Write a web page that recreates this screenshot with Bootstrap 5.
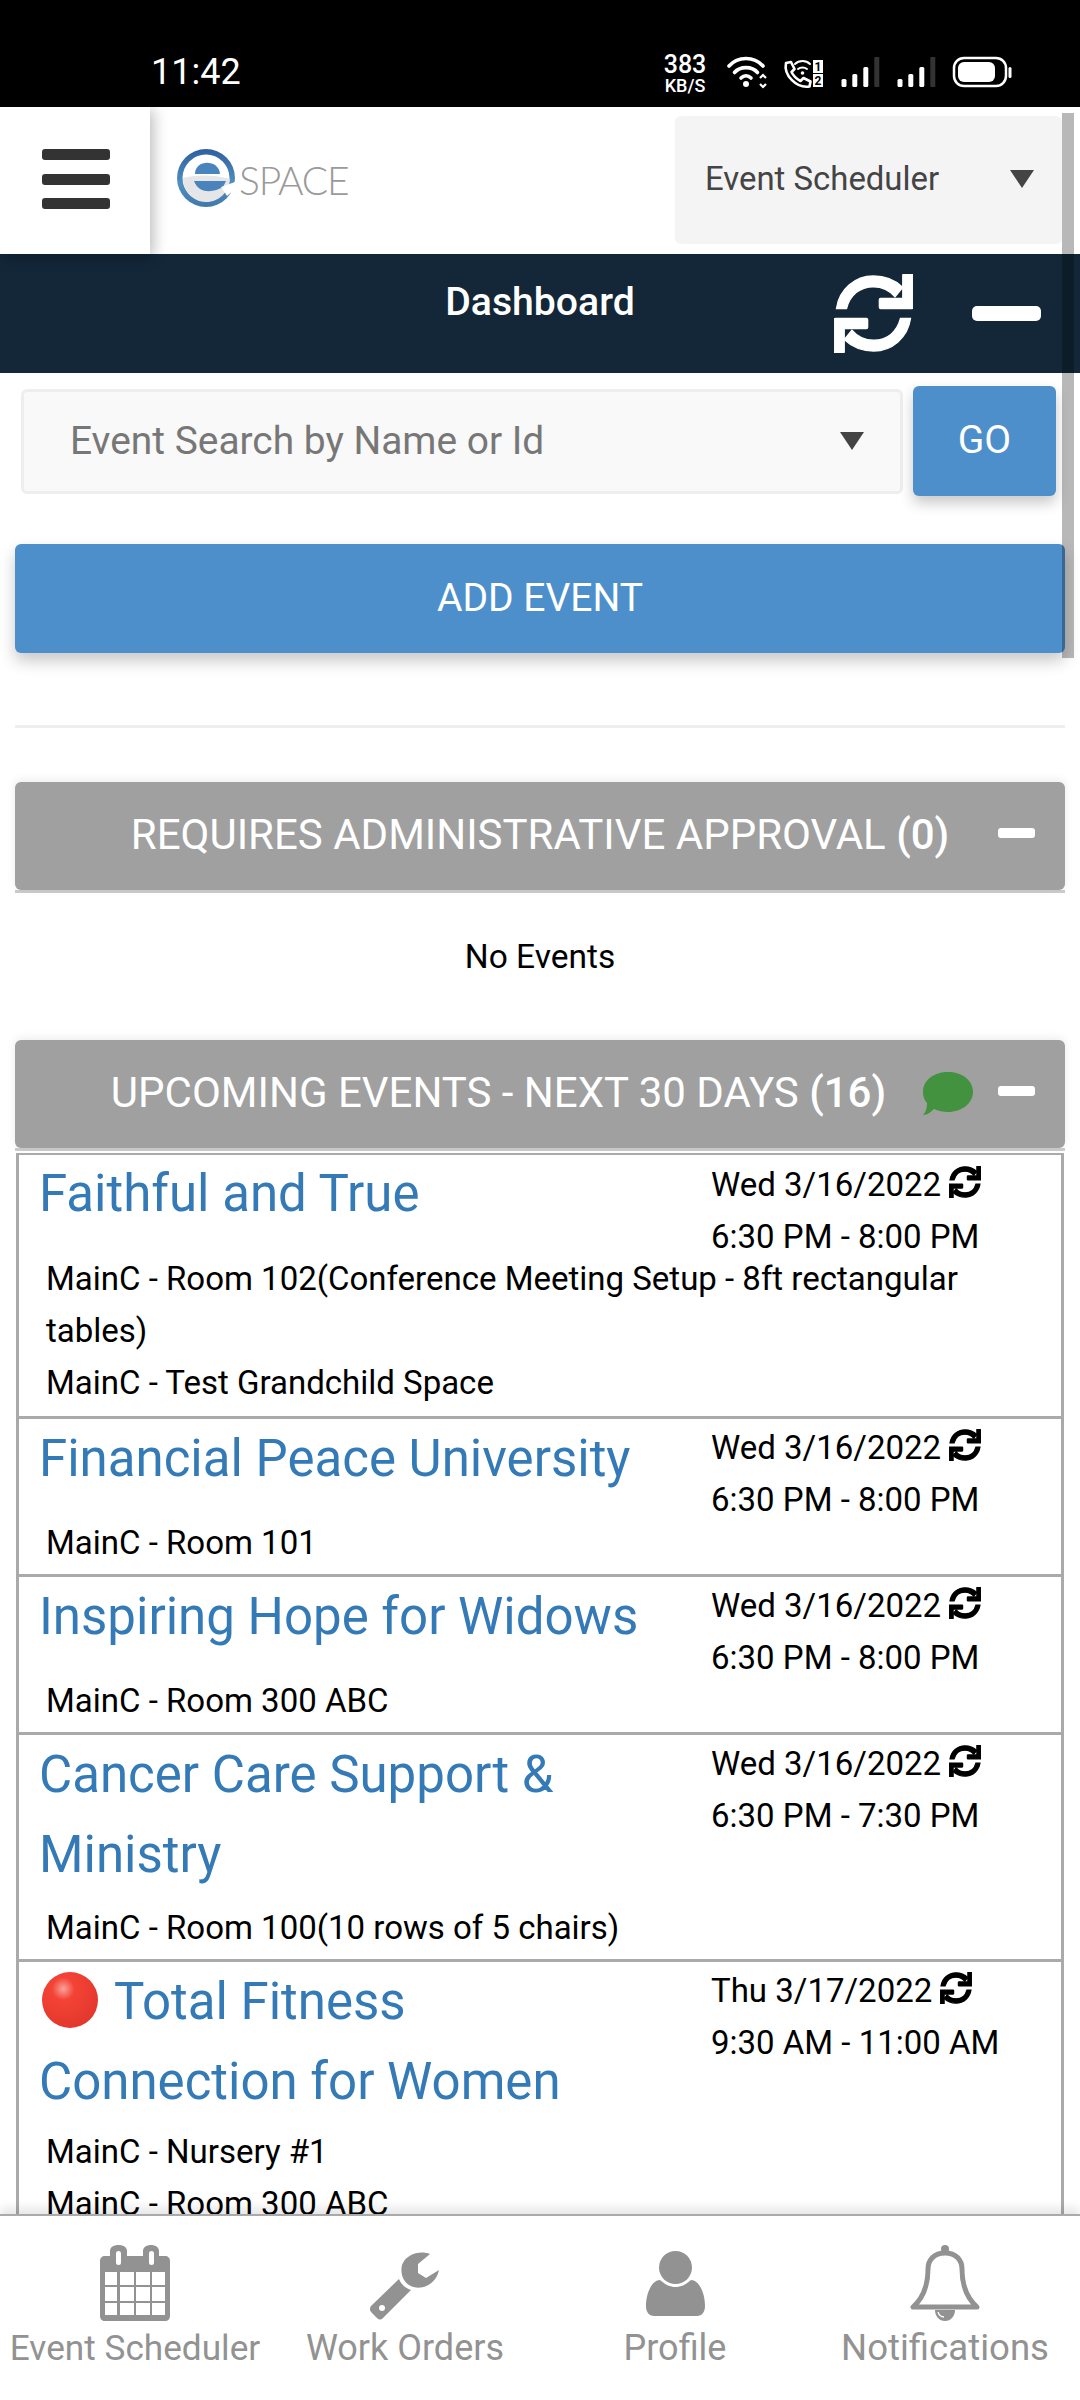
<!DOCTYPE html>
<html lang="en"><head><meta charset="utf-8"><title>eSpace Dashboard</title>
<link href="https://cdn.jsdelivr.net/npm/bootstrap@5.3.0/dist/css/bootstrap.min.css" rel="stylesheet">
<script src="https://cdn.jsdelivr.net/npm/bootstrap@5.3.0/dist/js/bootstrap.bundle.min.js"></script>
<style>
html,body{margin:0;width:1080px;height:2400px;overflow:hidden;background:#fff;font-family:Roboto,"Liberation Sans",sans-serif;}
.app-shell{width:1080px;height:2400px;position:relative;overflow:hidden;}
.status-strip{height:107px;background:#000;color:#fff;flex:none;position:relative;}
.clock{position:absolute;left:151px;top:48px;font-size:36px;line-height:48px;}
.speed{position:absolute;left:660px;top:52px;width:50px;text-align:center;line-height:1;font-weight:500;}
.speed b{display:block;font-size:25px;font-weight:500;line-height:25px;}
.speed i{display:block;font-size:18px;font-style:normal;line-height:17px;}
.status-svg{position:absolute;left:720px;top:50px;}
.top-head{height:147px;flex:none;background:#fff;position:relative;}
.burger{width:150px;height:147px;box-shadow:3px 3px 14px rgba(0,0,0,.28);position:relative;z-index:3;background:#fff;padding-top:42px;padding-left:42px;}
.burger span{display:block;width:68px;height:11px;border-radius:3px;background:#333;margin-bottom:13.5px;}
.brand{margin-left:27px;margin-bottom:6px;gap:4px;}
.brand-word{font-family:Lato,sans-serif;font-weight:300;font-size:39px;color:#9a9a9a;letter-spacing:-1.2px;line-height:1;margin-top:5px;}
.mod-select{position:absolute;left:675px;top:9px;width:387px;height:128px;background:#f4f4f4;border-radius:6px;padding:0 28px 3px 30px;color:#444;font-size:32.9px;}
.dash-bar{height:119px;flex:none;background:#132739;color:#fff;position:relative;}
.dash-title{position:absolute;left:0;right:0;top:21px;text-align:center;font-size:39.2px;font-weight:500;line-height:54px;}
.dash-sync{position:absolute;left:834px;top:20px;}
.dash-minus{position:absolute;left:972px;top:52px;width:69px;height:15px;border-radius:5px;background:#fff;}
.page-body{flex:1 1 auto;min-height:0;overflow:hidden;padding:13px 15px 0;}
.search-row{padding:0 9px 0 6px;gap:10px;}
.search-box{flex:1 1 auto;height:105px;background:#f9f9f9;border:3px solid #eee;border-radius:6px;color:#777;font-size:38.9px;padding:0 36px 0 46px;}
.btn.go-btn{width:143px;height:110px;background:#4d8fcb;border:0;border-radius:6px;color:#fff;font-size:39px;font-weight:400;padding:0 0 1px;box-shadow:0 7px 14px rgba(0,0,0,.22);}
.btn.add-btn{display:block;width:100%;height:109px;margin-top:48px;background:#4d8fcb;border:0;border-radius:6px;color:#fff;font-size:39px;font-weight:400;padding:0;box-shadow:0 8px 16px rgba(0,0,0,.22);}
.soft-rule{height:3px;background:#eee;margin:72px 0 54px;}
.fold-head{height:108px;background:#a0a0a0;border-radius:6px;color:#fff;font-size:42px;font-weight:400;position:relative;padding-bottom:3px;box-shadow:0 -2px 10px rgba(0,0,0,.08);white-space:nowrap;}
.fold-head b{font-weight:500;}
.fold-minus{position:absolute;left:983px;top:46px;width:37px;height:10px;border-radius:3px;background:#fff;}
.fold-line{height:3px;background:#ccc;}
.no-events{height:147px;text-align:center;font-size:33.5px;color:#000;padding-top:38px;line-height:52px;}
.bubble{margin-left:37px;margin-right:-4px;margin-top:2px;flex:none;}
.ev-list{border:solid #aaa;border-width:2px 3px 0;border-radius:0;margin:2px 1px 0;}
.ev-list .list-group-item{border:0;border-bottom:3px solid #aaa;border-radius:0;padding:0 0 5px;background:#fff;}
.ev-left{width:692px;padding:0 0 7px 20px;flex:none;}
.ev-left a{font-size:51px;line-height:80px;color:#337ab7;text-decoration:none;display:block;}
.red-dot{vertical-align:-9px;margin:0 16px 0 3px;}
.ev-right{padding-top:3px;font-size:33px;line-height:52px;color:#000;margin-bottom:-9px;white-space:nowrap;}
.ev-list .list-group-item:first-child{padding-bottom:7px;}
.ev-list .list-group-item:first-child .ev-right{padding-top:4px;margin-bottom:-10px;}
.ev-list .list-group-item:first-child .ev-left a{margin-top:-1px;}
.ev-list .list-group-item:last-child .ev-left{padding-bottom:4px;}
.ev-place{padding-left:27px;padding-right:50px;font-size:33px;line-height:52px;color:#000;}
.small-sync{vertical-align:-2px;margin-left:8px;}
.tab-bar{position:absolute;left:0;right:0;top:2214px;height:186px;background:#fff;border-top:2px solid #aaa;box-shadow:0 -6px 10px rgba(0,0,0,.1);z-index:4;color:#929292;font-size:36px;text-align:center;}
.tab-pic{height:76px;margin-top:29px;display:flex;justify-content:center;align-items:flex-start;}
.tab-name{line-height:44px;margin-top:5px;white-space:nowrap;}
.tab-name-tight{font-size:35.2px;}
.tab-name-wide{font-size:36.6px;}
.rail{position:absolute;left:1062px;top:113px;width:12px;height:545px;background:rgba(0,0,0,.28);z-index:5;}
</style></head>
<body>
<svg width="0" height="0" class="position-absolute"><defs><g id="syncshape"><path d="M110 175C118 118 165 78 220 78C255 78 285 90 308 112L285 140C268 120 245 110 220 110C180 110 150 135 140 175Z"/><path d="M308 76Q308 72 312 72H334Q338 72 338 76V171Q338 175 334 175H242Q238 175 238 171V149Q238 145 242 145H308Z"/><g transform="rotate(180 220.500 190)"><path d="M110 175C118 118 165 78 220 78C255 78 285 90 308 112L285 140C268 120 245 110 220 110C180 110 150 135 140 175Z"/><path d="M308 76Q308 72 312 72H334Q338 72 338 76V171Q338 175 334 175H242Q238 175 238 171V149Q238 145 242 145H308Z"/></g></g></defs></svg>
<div class="app-shell d-flex flex-column">
  <div class="status-strip">
    <div class="clock">11:42</div>
    <div class="speed"><b>383</b><i>KB/S</i></div>
    <svg class="status-svg" width="300" height="45" viewBox="720 50 300 45" fill="none">
      <g stroke="#fff" stroke-width="3.6" stroke-linecap="round">
        <path d="M729 66C738 56 754 56 763 66"/><path d="M734.500 72.500C740 66 752 66 757.500 72.500"/><path d="M741 78C744 75 748 75 751 78"/>
      </g>
      <circle cx="746" cy="84" r="3" fill="#fff"/>
      <path d="M760 78l3-3 3 3M760 84l3 3 3-3" stroke="#fff" stroke-width="2.2"/>
      <path d="M786 63l5-1 3.500 7-3 3c2 4 5 7 9 9l3-3 7 3.500-1 5c-13 2-26-11-23.500-23.500z" stroke="#fff" stroke-width="2.6" stroke-linejoin="round"/>
      <path d="M795 64c4-4 11-4 15 0M798 69c2.500-2 6.500-2 9 0" stroke="#fff" stroke-width="2" stroke-linecap="round"/>
      <circle cx="802.500" cy="73" r="1.800" fill="#fff"/>
      <rect x="813" y="60" width="10" height="13" fill="#fff"/><rect x="813" y="74" width="10" height="13" fill="#fff"/>
      <text x="818" y="71" font-size="12" font-weight="700" fill="#000" text-anchor="middle" font-family="Roboto">1</text>
      <text x="818" y="85" font-size="12" font-weight="700" fill="#000" text-anchor="middle" font-family="Roboto">2</text>
      <g fill="#fff"><rect x="841.500" y="79" width="5" height="8" rx="1.500"/><rect x="852.300" y="74" width="5" height="13" rx="1.500"/><rect x="863.300" y="67" width="5" height="20" rx="1.500"/></g>
      <rect x="874.300" y="57" width="5" height="30" rx="1" fill="#333"/>
      <g fill="#fff"><rect x="897.500" y="79" width="5" height="8" rx="1.500"/><rect x="908.300" y="74" width="5" height="13" rx="1.500"/><rect x="919.300" y="67" width="5" height="20" rx="1.500"/></g>
      <rect x="930.300" y="57" width="5" height="30" rx="1" fill="#333"/>
      <rect x="954" y="58" width="52" height="28" rx="10" stroke="#fff" stroke-width="2.500"/>
      <rect x="958" y="62" width="37" height="20" rx="6" fill="#fff"/>
      <rect x="1008.500" y="67" width="3" height="11" rx="1.500" fill="#fff"/>
    </svg>
  </div>
  <header class="top-head d-flex align-items-center">
    <div class="burger"><span></span><span></span><span></span></div>
    <div class="brand d-flex align-items-center">
      <svg width="58" height="58" viewBox="0 0 58 58">
        <defs><linearGradient id="ringg" x1="0" y1="0" x2="0" y2="1"><stop offset="0" stop-color="#2f5f9f"/><stop offset=".6" stop-color="#4f8fc0"/><stop offset="1" stop-color="#3f78ac"/></linearGradient></defs>
        <circle cx="29" cy="29" r="29" fill="url(#ringg)"/>
        <circle cx="29" cy="29" r="23.500" fill="#fff"/>
        <path d="M6 29C16 26 36 25 53 30C52 43 42 53 29 53C16 53 6 42 6 29Z" fill="#e5e6e7"/>
        <path d="M18 25C18 10 42 10 43 25Z" fill="#4a84bd"/>
        <path d="M17 32H49L46 38C38 43 22 46 17 32Z" fill="#4a84bd"/>
        <path d="M44 38L58 33V40L50 47Z" fill="#fff"/>
      </svg>
      <span class="brand-word">SPACE</span>
    </div>
    <div class="mod-select d-flex align-items-center justify-content-between">
      <span>Event Scheduler</span>
      <svg width="24" height="18" viewBox="0 0 24 18"><path d="M0 0H24L12 18Z" fill="#444"/></svg>
    </div>
  </header>
  <div class="dash-bar">
    <div class="dash-title">Dashboard</div>
    <svg class="dash-sync" width="79" height="79" viewBox="103 72 235 236" fill="#fff" stroke="#fff" stroke-width="4"><use href="#syncshape"/></svg>
    <div class="dash-minus"></div>
  </div>
  <main class="page-body">
    <div class="search-row d-flex align-items-center">
      <div class="search-box d-flex align-items-center justify-content-between">
        <span>Event Search by Name or Id</span>
        <svg width="24" height="18" viewBox="0 0 24 18"><path d="M0 0H24L12 18Z" fill="#444"/></svg>
      </div>
      <button type="button" class="btn go-btn">GO</button>
    </div>
    <button type="button" class="btn add-btn">ADD EVENT</button>
    <div class="soft-rule"></div>

    <div class="fold-head d-flex align-items-center justify-content-center">
      <span>REQUIRES ADMINISTRATIVE APPROVAL <b>(0)</b></span>
      <span class="fold-minus"></span>
    </div>
    <div class="fold-line"></div>
    <div class="no-events">No Events</div>

    <div class="fold-head d-flex align-items-center justify-content-center">
      <span>UPCOMING EVENTS - NEXT 30 DAYS <b>(16)</b></span>
      <svg class="bubble" width="50" height="43" viewBox="0 0 50 43"><path fill="#43923f" d="M25 0C39 0 50 8 50 20C50 31 39 40 25 40C20 40 15 39 11 37C8 40 4 43 0 43C3 40 4 36 4 31C1 28 0 24 0 20C0 8 11 0 25 0Z"/></svg>
      <span class="fold-minus"></span>
    </div>
    <div class="fold-line"></div>

    <div class="list-group ev-list">
      <div class="list-group-item">
        <div class="d-flex">
          <div class="ev-left"><a href="#">Faithful and True</a></div>
          <div class="ev-right">Wed 3/16/2022<svg class="small-sync" width="32" height="32" viewBox="103 72 235 236" fill="#000" stroke="#000" stroke-width="9"><use href="#syncshape"/></svg><br>6:30 PM - 8:00 PM</div>
        </div>
        <div class="ev-place">MainC - Room 102(Conference Meeting Setup - 8ft rectangular tables)</div>
        <div class="ev-place">MainC - Test Grandchild Space</div>
      </div>
      <div class="list-group-item">
        <div class="d-flex">
          <div class="ev-left"><a href="#">Financial Peace University</a></div>
          <div class="ev-right">Wed 3/16/2022<svg class="small-sync" width="32" height="32" viewBox="103 72 235 236" fill="#000" stroke="#000" stroke-width="9"><use href="#syncshape"/></svg><br>6:30 PM - 8:00 PM</div>
        </div>
        <div class="ev-place">MainC - Room 101</div>
      </div>
      <div class="list-group-item">
        <div class="d-flex">
          <div class="ev-left"><a href="#">Inspiring Hope for Widows</a></div>
          <div class="ev-right">Wed 3/16/2022<svg class="small-sync" width="32" height="32" viewBox="103 72 235 236" fill="#000" stroke="#000" stroke-width="9"><use href="#syncshape"/></svg><br>6:30 PM - 8:00 PM</div>
        </div>
        <div class="ev-place">MainC - Room 300 ABC</div>
      </div>
      <div class="list-group-item">
        <div class="d-flex">
          <div class="ev-left"><a href="#">Cancer Care Support &amp; Ministry</a></div>
          <div class="ev-right">Wed 3/16/2022<svg class="small-sync" width="32" height="32" viewBox="103 72 235 236" fill="#000" stroke="#000" stroke-width="9"><use href="#syncshape"/></svg><br>6:30 PM - 7:30 PM</div>
        </div>
        <div class="ev-place">MainC - Room 100(10 rows of 5 chairs)</div>
      </div>
      <div class="list-group-item">
        <div class="d-flex">
          <div class="ev-left"><a href="#"><svg class="red-dot" width="56" height="56" viewBox="0 0 56 56"><defs><radialGradient id="redg" cx=".38" cy=".3" r=".8"><stop offset="0" stop-color="#f9a39a"/><stop offset=".25" stop-color="#f44336"/><stop offset="1" stop-color="#e0352b"/></radialGradient></defs><circle cx="28" cy="28" r="28" fill="url(#redg)"/></svg>Total Fitness<br>Connection for Women</a></div>
          <div class="ev-right">Thu 3/17/2022<svg class="small-sync" width="32" height="32" viewBox="103 72 235 236" fill="#000" stroke="#000" stroke-width="9"><use href="#syncshape"/></svg><br>9:30 AM - 11:00 AM</div>
        </div>
        <div class="ev-place">MainC - Nursery #1</div>
        <div class="ev-place">MainC - Room 300 ABC</div>
      </div>
    </div>
  </main>
  <div class="rail"></div>
  <nav class="tab-bar">
    <div class="row g-0">
      <div class="col-3">
        <div class="tab-pic"><svg width="70" height="76" viewBox="0 0 70 76"><path fill="#929292" d="M5 11H10V6C10 2 14 0 18.500 0C23 0 27 2 27 6V11H43V6C43 2 47 0 51 0C55 0 59 2 59 6V11H65C68 11 70 13 70 16V71C70 74 68 76 65 76H5C2 76 0 74 0 71V16C0 13 2 11 5 11Z"/><g fill="#fff"><rect x="16" y="6" width="5" height="14" rx="2.500"/><rect x="49" y="6" width="5" height="14" rx="2.500"/><rect x="5" y="27" width="12" height="13"/><rect x="20" y="27" width="14" height="13"/><rect x="36" y="27" width="14" height="13"/><rect x="52" y="27" width="13" height="13"/><rect x="5" y="42" width="12" height="14"/><rect x="20" y="42" width="14" height="14"/><rect x="36" y="42" width="14" height="14"/><rect x="52" y="42" width="13" height="14"/><rect x="5" y="58" width="12" height="12"/><rect x="20" y="58" width="14" height="12"/><rect x="36" y="58" width="14" height="12"/><rect x="52" y="58" width="13" height="12"/></g></svg></div>
        <div class="tab-name tab-name-tight">Event Scheduler</div>
      </div>
      <div class="col-3">
        <div class="tab-pic"><svg width="70" height="76" viewBox="0 -6 70 76"><path fill="#929292" d="M60 3C50-1 36 3 32 14C30 22 33 30 39 34C50 41 66 34 69 19L56 27L48 22L48 13Z"/><path fill="#929292" d="M29 28L1 55C-1 58 0 60 2 62L7 67C9 69 11 69 13 67L41 39C35 37 31 33 29 28Z"/><circle cx="12" cy="57" r="3" fill="#fff"/></svg></div>
        <div class="tab-name">Work Orders</div>
      </div>
      <div class="col-3">
        <div class="tab-pic"><svg width="59" height="76" viewBox="0 -6 59 76"><circle cx="29.500" cy="16.500" r="16.500" fill="#929292"/><path fill="#929292" d="M14 29C20 34 24 36 29.500 36C35 36 39 34 45 29C53 29 59 42 59 55C59 61 56 65 51 65H8C3 65 0 61 0 55C0 42 6 29 14 29Z"/></svg></div>
        <div class="tab-name">Profile</div>
      </div>
      <div class="col-3">
        <div class="tab-pic"><svg width="70" height="76" viewBox="0 0 70 76"><circle cx="35" cy="4" r="4" fill="#929292"/><path fill="none" stroke="#929292" stroke-width="5" stroke-linejoin="round" d="M35 8C24 8 18 15 18 24C18 42 12 54 3 62H67C58 54 52 42 52 24C52 15 46 8 35 8Z"/><path fill="#929292" d="M25 65H45C45 71 41 76 35 76C29 76 25 71 25 65Z"/><path fill="none" stroke="#fff" stroke-width="1.300" d="M28 67C29 70 31 72 34 72"/></svg></div>
        <div class="tab-name tab-name-wide">Notifications</div>
      </div>
    </div>
  </nav>
</div>
</body></html>
